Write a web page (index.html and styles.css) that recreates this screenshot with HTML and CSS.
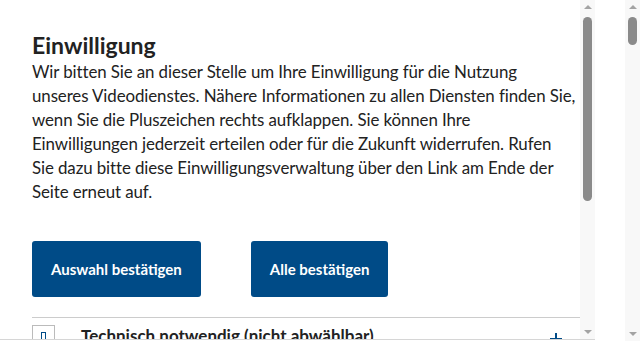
FILE: index.html
```html
<!DOCTYPE html>
<html lang="de">
<head>
    <meta charset="UTF-8">
    <meta name="viewport" content="width=device-width, initial-scale=1.0">
    <title>Einwilligung</title>
    <link rel="stylesheet" href="styles.css">
</head>
<body>
    <div class="consent">
        <div class="consent-body">
            <h2>Einwilligung</h2>
            <p>Wir bitten Sie an dieser Stelle um Ihre Einwilligung für die Nutzung<br>
            unseres Videodienstes. Nähere Informationen zu allen Diensten finden Sie,<br>
            wenn Sie die Pluszeichen rechts aufklappen. Sie können Ihre<br>
            Einwilligungen jederzeit erteilen oder für die Zukunft widerrufen. Rufen<br>
            Sie dazu bitte diese Einwilligungsverwaltung über den Link am Ende der<br>
            Seite erneut auf.</p>
            <div class="actions">
                <button class="btn">Auswahl bestätigen</button>
                <button class="btn">Alle bestätigen</button>
            </div>
            <div class="service">
                <span class="check"><span class="check-mark"></span></span>
                <span class="service-name">Technisch notwendig (nicht abwählbar)</span>
                <span class="plus">
                    <svg width="12" height="12" viewBox="0 0 12 12"><path d="M6 0v12M0 6h12" stroke="#004b87" stroke-width="2"/></svg>
                </span>
            </div>
        </div>
        <div class="scrollbar">
            <span class="arrow up"></span>
            <span class="thumb"></span>
            <span class="arrow down"></span>
        </div>
    </div>
    <div class="scrollbar page-scrollbar">
        <span class="arrow up"></span>
        <span class="thumb short"></span>
        <span class="arrow down"></span>
    </div>
</body>
</html>
```

FILE: styles.css
```css
body {
    margin: 0;
    height: 341px;
    overflow: hidden;
    font-family: Lato, "Noto Sans", sans-serif;
    color: #222;
    background: #fff;
}
.consent {
    display: flex;
    width: 595px;
    height: 339px;
    border-bottom: 1px solid #d6d6d6;
}
.consent-body {
    flex: 1;
    overflow: hidden;
    padding: 30px 0 0 32px;
}
h2 {
    margin: 0;
    font-size: 23px;
    font-weight: bold;
    line-height: 30px;
}
p {
    margin: 0;
    font-size: 16.9px;
    line-height: 24px;
    letter-spacing: -0.1px;
    white-space: nowrap;
}
.actions {
    display: flex;
    gap: 50px;
    margin-top: 37px;
    padding-bottom: 20px;
    border-bottom: 1px solid #ccc;
}
.btn {
    height: 56px;
    padding: 0 19px;
    font-family: inherit;
    font-size: 15px;
    font-weight: bold;
    color: #fff;
    background: #004b87;
    border: none;
    border-radius: 3px;
}
.service {
    display: flex;
    align-items: flex-start;
    padding-top: 7px;
}
.check {
    position: relative;
    flex: none;
    width: 21px;
    height: 21px;
    border: 1px solid #bbb;
    margin-right: 26px;
}
.check-mark {
    position: absolute;
    left: 8px;
    top: 6px;
    width: 3px;
    height: 8px;
    border: 1px solid #004b87;
}
.service-name {
    flex: 1;
    margin-top: 1px;
    font-size: 17px;
    font-weight: bold;
    line-height: 20px;
}
.plus {
    margin: 4px 18px 0 0;
}
.scrollbar {
    display: flex;
    flex-direction: column;
    align-items: center;
    width: 15px;
    height: 339px;
    background: #f8f8f8;
}
.page-scrollbar {
    position: fixed;
    top: 0;
    right: 0;
    height: 341px;
}
.arrow {
    width: 0;
    height: 0;
    border-left: 4px solid transparent;
    border-right: 4px solid transparent;
}
.arrow.up {
    margin-top: 5px;
    border-bottom: 4px solid #a3a3a3;
}
.arrow.down {
    margin-top: auto;
    margin-bottom: 5px;
    border-top: 4px solid #a3a3a3;
}
.thumb {
    width: 9px;
    height: 184px;
    margin-top: 8px;
    border-radius: 5px;
    background: #8a8a8a;
}
.thumb.short {
    height: 28px;
}
```
